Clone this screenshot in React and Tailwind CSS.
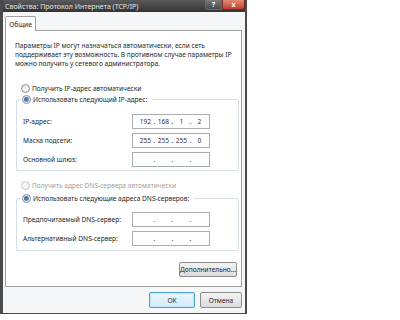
const font = { fontFamily: '"Noto Sans", "Liberation Sans", sans-serif' };

const Radio = ({ checked, disabled }) => (
  <span
    className={`flex h-[9px] w-[9px] shrink-0 items-center justify-center rounded-full border ${
      disabled ? 'border-[#c4c4c4] bg-[#f4f4f4]' : 'border-[#8e8f8f] bg-gradient-to-br from-[#e2e2e2] to-[#fcfcfc]'
    }`}
  >
    {checked && <span className="h-[5px] w-[5px] rounded-full bg-gradient-to-br from-[#2a5f9e] to-[#6ba2d6]" />}
  </span>
);

const RadioRow = ({ label, checked, disabled, className = '' }) => (
  <div className={`flex h-[11px] items-center gap-[2px] ${className}`}>
    <Radio checked={checked} disabled={disabled} />
    <span className={disabled ? 'text-[#a0a0a0]' : 'text-[#1e1e1e]'}>{label}</span>
  </div>
);

const IpField = ({ parts = ['', '', '', ''] }) => (
  <div className="flex h-[15px] w-[78px] items-center border border-[#abadb3] bg-white pl-[6px] text-[#333]">
    {parts.map((p, i) => (
      <div key={i} className="flex items-center">
        <span className="w-[13px] text-center">{p}</span>
        {i < 3 && <span className="w-[5px] text-center">.</span>}
      </div>
    ))}
  </div>
);

const FieldRow = ({ label, parts, className = '' }) => (
  <div className={`flex items-center ${className}`}>
    <span className="w-[109px] text-[#1e1e1e]">{label}</span>
    <IpField parts={parts} />
  </div>
);

const GroupBox = ({ caption, className = '', children }) => (
  <div className={`relative ml-[10px] w-[223px] rounded-[2px] border border-[#d5dfe5] ${className}`}>
    <div className="absolute -top-[6px] left-[4px] bg-white pr-[5px] pl-[1px]">
      <RadioRow label={caption} checked />
    </div>
    {children}
  </div>
);

const WinButton = ({ children, primary, className = '' }) => (
  <button
    className={`flex items-center justify-center rounded-[2px] border text-[#1e1e1e] ${
      primary
        ? 'border-[#4fa3d0] bg-gradient-to-b from-[#eaf6fd] to-[#d2ecf9] shadow-[inset_0_0_0_1px_#bfe6f8]'
        : 'border-[#8d8d8d] bg-gradient-to-b from-[#f4f4f4] to-[#dcdcdc]'
    } ${className}`}
  >
    {children}
  </button>
);

export default function App() {
  return (
    <div className="h-[320px] w-[400px] bg-white text-[6.6px] leading-[9px]" style={font}>
      <div className="flex h-[314px] w-[247px] flex-col border-r-2 border-b border-l-[3px] border-[#4a4a4a] bg-[#f4f6f8]">
        {/* title bar */}
        <div className="flex h-[12px] shrink-0 items-center justify-between bg-gradient-to-b from-[#5a5a5a] to-[#343434] pl-[2px]">
          <span className="text-[7px] text-[#e4e4e4]">Свойства: Протокол Интернета (TCP/IP)</span>
          <div className="flex h-full items-start">
            <div className="flex h-[10px] w-[17px] items-center justify-center rounded-bl-[3px] border border-t-0 border-[#6a6a6a] bg-gradient-to-b from-[#7b7b7b] to-[#4a4a4a] text-[7px] font-bold text-white">
              ?
            </div>
            <div className="flex h-[10px] w-[23px] items-center justify-center rounded-br-[3px] border border-t-0 border-[#7a2a22] bg-gradient-to-b from-[#e08a78] to-[#c2392a] text-[7px] font-bold text-white">
              x
            </div>
          </div>
        </div>

        {/* tabs */}
        <div className="flex flex-1 flex-col pt-[4px] pl-[2px]">
          <div className="relative z-10 -mb-px flex h-[15px] w-[31px] items-center justify-center rounded-t-[2px] border border-b-0 border-[#a0a0a0] bg-white text-[#1e1e1e]">
            Общие
          </div>
          <div className="flex h-[257px] w-[237px] flex-col border border-[#a0a0a0] bg-white">
            <p className="mt-[10px] ml-[9px] text-[#1e1e1e]">
              Параметры IP могут назначаться автоматически, если сеть
              <br />
              поддерживает эту возможность. В противном случае параметры IP
              <br />
              можно получить у сетевого администратора.
            </p>

            <RadioRow label="Получить IP-адрес автоматически" className="mt-[15px] ml-[15px]" />

            <GroupBox caption="Использовать следующий IP-адрес:" className="mt-[5px] h-[72px]">
              <div className="flex flex-col pt-[14px] pl-[6px]">
                <FieldRow label="IP-адрес:" parts={['192', '168', '1', '2']} />
                <FieldRow label="Маска подсети:" parts={['255', '255', '255', '0']} className="mt-[4px]" />
                <FieldRow label="Основной шлюз:" className="mt-[4px]" />
              </div>
            </GroupBox>

            <RadioRow label="Получить адрес DNS-сервера автоматически" disabled className="mt-[9px] ml-[15px]" />

            <GroupBox caption="Использовать следующие адреса DNS-серверов:" className="mt-[7px] h-[53px]">
              <div className="flex flex-col pt-[13px] pl-[6px]">
                <FieldRow label="Предпочитаемый DNS-сервер:" />
                <FieldRow label="Альтернативный DNS-сервер:" className="mt-[4px]" />
              </div>
            </GroupBox>

            <div className="mt-[11px] flex justify-end pr-[4px]">
              <WinButton className="h-[15px] w-[58px]">Дополнительно...</WinButton>
            </div>
          </div>

          <div className="flex justify-end gap-[5px] pt-[5px] pr-[3px]">
            <WinButton primary className="h-[16px] w-[46px]">OK</WinButton>
            <WinButton className="h-[16px] w-[42px]">Отмена</WinButton>
          </div>
        </div>
      </div>
    </div>
  );
}
